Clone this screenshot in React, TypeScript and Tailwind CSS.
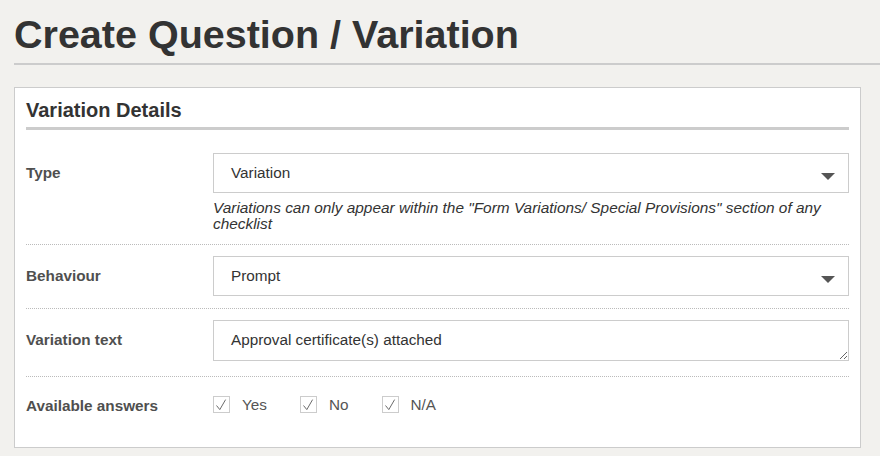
import React from "react";

const FONT = { fontFamily: '"Liberation Sans", Arial, sans-serif' };

function SelectBox({ value }: { value: string }) {
  return (
    <div className="flex h-[40px] items-center justify-between border border-[#ccc] bg-white pl-[17px] pr-[13px] text-[15.3px] leading-[20px] text-[#333]">
      <span>{value}</span>
      <span className="mt-[6px] h-0 w-0 border-l-[7px] border-r-[7px] border-t-[7px] border-l-transparent border-r-transparent border-t-[#555]" />
    </div>
  );
}

function Check({ label }: { label: string }) {
  return (
    <div className="flex h-[17px] items-center gap-[12px]">
      <svg width="17" height="17" viewBox="0 0 17 17" className="shrink-0">
        <rect x="0.5" y="0.5" width="16" height="16" fill="#fff" stroke="#ccc" />
        <path d="M3.5 9.5 L6.8 13.6 L12.6 3.6" fill="none" stroke="#6b6b6b" strokeWidth="1" />
      </svg>
      <span className="text-[15.3px] leading-[17px] text-[#555]">{label}</span>
    </div>
  );
}

function Row({ label, children, first, labelPad = "pt-[10px]", className = "" }: {
  label: string;
  children: React.ReactNode;
  first?: boolean;
  labelPad?: string;
  className?: string;
}) {
  return (
    <div className={`flex ${first ? "" : "border-t border-dotted border-[#bbb]"} ${className}`}>
      <div className={`w-[187px] shrink-0 text-[15.3px] font-bold leading-[20px] text-[#4f4f4f] ${labelPad}`}>{label}</div>
      <div className="min-w-0 flex-1">{children}</div>
    </div>
  );
}

export default function App() {
  return (
    <div className="min-h-[456px] w-[880px] bg-[#f2f1ee] pb-[9px]" style={FONT}>
      <div className="ml-[14px] border-b-2 border-[#ccc] pb-[7px] pt-[12px]">
        <h1 className="text-[39.5px] font-bold leading-[44px] text-[#333]">Create Question / Variation</h1>
      </div>

      <div className="ml-[14px] mr-[19px] mt-[22px] border border-[#ccc] bg-white px-[11px] pb-[31px] pt-[10px]">
        <h2 className="border-b-[3px] border-[#ccc] pb-[5px] text-[20px] font-bold leading-[24px] text-[#333]">
          Variation Details
        </h2>

        <div className="mt-[12px]">
          <Row label="Type" first className="pb-[12px] pt-[11px]">
            <SelectBox value="Variation" />
            <p className="mt-[7px] text-[15.4px] italic leading-[16px] text-[#333]">
              Variations can only appear within the "Form Variations/ Special Provisions" section of any checklist
            </p>
          </Row>

          <Row label="Behaviour" className="pb-[12px] pt-[11px]">
            <SelectBox value="Prompt" />
          </Row>

          <Row label="Variation text" className="pb-[15px] pt-[11px]">
            <textarea
              readOnly
              value="Approval certificate(s) attached"
              className="block h-[41px] w-full border border-[#ccc] bg-white pl-[17px] pt-[9px] text-[15.3px] leading-[20px] text-[#333] outline-none"
            />
          </Row>

          <Row label="Available answers" labelPad="pt-0" className="pt-[19px]">
            <div className="flex gap-[33px]">
              <Check label="Yes" />
              <Check label="No" />
              <Check label="N/A" />
            </div>
          </Row>
        </div>
      </div>
    </div>
  );
}
